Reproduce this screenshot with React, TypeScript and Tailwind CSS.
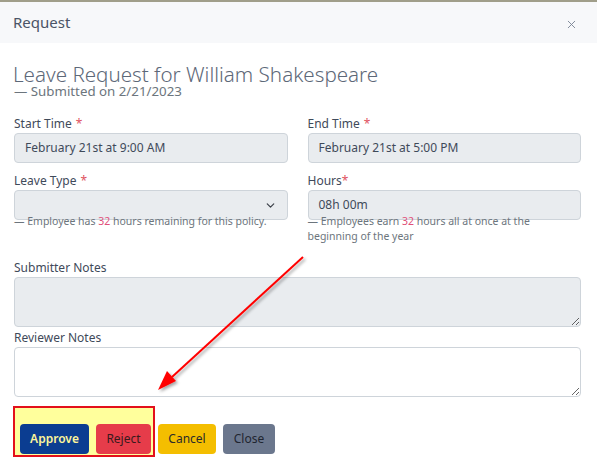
import { ChevronDown, X } from "lucide-react";

function Label({ text, star, tight }: { text: string; star?: boolean; tight?: boolean }) {
  return (
    <label className="block text-[12px] leading-[15px] text-[#3f4a5a] mb-[2px]">
      {text}
      {star && <span className={`text-[#e0535f] ${tight ? "" : "ml-[4px]"}`}>*</span>}
    </label>
  );
}

function ReadInput({ value }: { value: string }) {
  return (
    <div className="h-[30px] rounded-[4px] border border-[#ced4da] bg-[#e9ecef] px-[10px] flex items-center text-[12px] text-[#3f4a5a]">
      {value}
    </div>
  );
}

export default function App() {
  return (
    <div className="relative w-[597px] h-[457px] overflow-hidden bg-white font-['Noto_Sans',sans-serif]">
      <div className="h-[2px] bg-[#a09e8a]" />
      <div className="h-[41px] bg-[#f7f8fa] flex items-center justify-between pl-[13px] pr-[19px]">
        <span className="text-[15px] text-[#4a5466]">Request</span>
        <X className="mt-[3px] w-[13px] h-[13px] text-[#7a8494]" strokeWidth={1.7} />
      </div>

      <div className="pl-[14px] pr-[16px]">
        <h1 className="mt-[19px] text-[20.6px] leading-[24px] font-light text-[#5d6878] -ml-[1px]">
          Leave Request for William Shakespeare
        </h1>
        <p className="-mt-[1px] text-[13.3px] leading-[12px] text-[#6c757d]">— Submitted on 2/21/2023</p>

        <div className="mt-[19px] grid grid-cols-2 gap-x-[20px]">
          <div>
            <Label text="Start Time" star />
            <ReadInput value="February 21st at 9:00 AM" />
          </div>
          <div>
            <Label text="End Time" star />
            <ReadInput value="February 21st at 5:00 PM" />
          </div>

          <div className="mt-[10px]">
            <Label text="Leave Type" star />
            <div className="h-[30px] rounded-[4px] border border-[#ced4da] bg-[#e9ecef] px-[10px] flex items-center justify-end">
              <ChevronDown className="w-[13px] h-[13px] text-[#3a3f47]" strokeWidth={2.2} />
            </div>
            <p className="-mt-[6px] text-[10.5px] leading-[15px] text-[#6c757d]">
              — Employee has <span className="text-[#e0507a]">32</span> hours remaining for this policy.
            </p>
          </div>
          <div className="mt-[10px]">
            <Label text="Hours" star tight />
            <ReadInput value="08h 00m" />
            <p className="-mt-[6px] w-[236px] text-[10.5px] leading-[15px] text-[#6c757d]">
              — Employees earn <span className="text-[#e0507a]">32</span> hours all at once at the beginning of the year
            </p>
          </div>
        </div>

        <div className="mt-[16px]">
          <Label text="Submitter Notes" />
          <textarea
            readOnly
            className="block w-full h-[50px] rounded-[4px] border border-[#ced4da] bg-[#e9ecef] resize-y"
          />
        </div>
        <div className="mt-[3px]">
          <Label text="Reviewer Notes" />
          <textarea
            readOnly
            className="block w-full h-[50px] rounded-[4px] border border-[#ced4da] bg-white resize-y"
          />
        </div>
      </div>

      <div className="mt-[9px] ml-[13px] flex items-end gap-[3px]">
        <div className="w-[142px] h-[51px] border-2 border-[#e3101b] bg-[#ffff9c] flex items-end gap-[7px] pl-[5px] pb-[1px]">
          <button className="w-[69px] h-[30px] rounded-[4px] bg-[#0b3d91] text-[12px] font-semibold text-[#fdf59a]">
            Approve
          </button>
          <button className="w-[55px] h-[30px] rounded-[4px] bg-[#e63c4a] text-[12px] text-[#3a1a1c]">
            Reject
          </button>
        </div>
        <div className="flex gap-[7px] pb-[3px]">
          <button className="w-[58px] h-[30px] rounded-[4px] bg-[#f4be00] text-[12px] text-[#2b2b2b]">
            Cancel
          </button>
          <button className="w-[52px] h-[30px] rounded-[4px] bg-[#6b778d] text-[12px] text-[#1f2530]">
            Close
          </button>
        </div>
      </div>

      <svg className="absolute inset-0 pointer-events-none" width="597" height="457">
        <defs>
          <filter id="sh" x="-20%" y="-20%" width="140%" height="140%">
            <feDropShadow dx="2" dy="2" stdDeviation="1.5" floodColor="#000" floodOpacity="0.35" />
          </filter>
        </defs>
        <g filter="url(#sh)">
          <line x1="303" y1="257" x2="172" y2="377" stroke="#ff0000" strokeWidth="2" />
          <polygon points="158,390 167,371 176,381" fill="#ff0000" />
        </g>
      </svg>
    </div>
  );
}
